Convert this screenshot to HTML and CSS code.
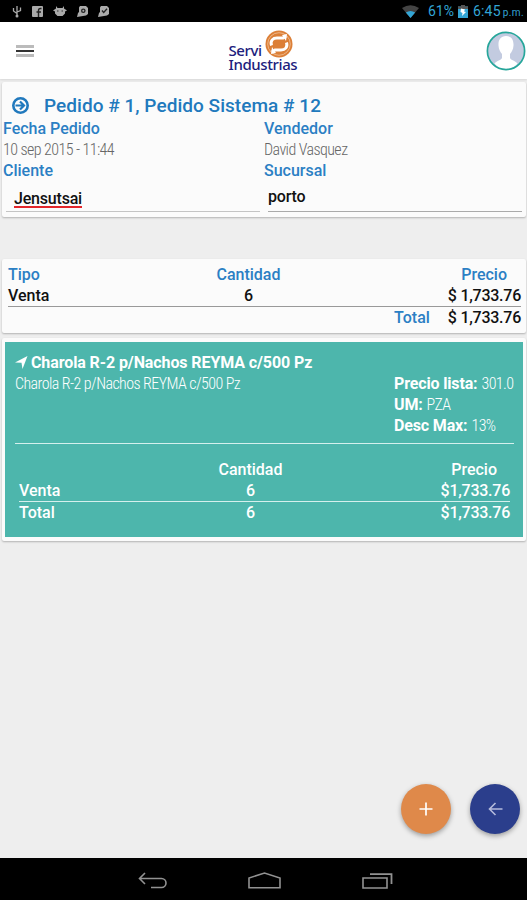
FILE: index.html
```html
<!DOCTYPE html>
<html lang="es">
<head>
    <meta charset="UTF-8">
    <meta name="viewport" content="width=device-width, initial-scale=1.0">
    <title>Servi Industrias - Pedido</title>
    <link rel="stylesheet" href="styles.css">
</head>
<body>
    <!-- Status bar -->
    <div class="status-bar">
        <div class="status-icons">
            <svg width="10" height="13" viewBox="0 0 10 13"><path d="M5 1v10M1.500 3v3L5 8.500M8.500 2.500v3L5 7" fill="none" stroke="#aaa" stroke-width="1.300"/><circle cx="5" cy="11" r="1.500" fill="#aaa"/></svg>
            <svg width="11" height="11" viewBox="0 0 11 11"><rect width="11" height="11" rx="1" fill="#aaa"/><path d="M6.500 11V4.500q0-2 2-2h1M4.500 6H9" fill="none" stroke="#222" stroke-width="1.400"/></svg>
            <svg width="14" height="10" viewBox="0 0 14 10"><path d="M3 0l1.500 2h5L11 0v2.500l3 2-2 1v2L9.500 10h-5L2 7.500v-2l-2-1 3-2z" fill="#aaa"/><path d="M4 5h1.500M8.500 5H10" stroke="#333"/></svg>
            <svg width="11" height="11" viewBox="0 0 11 11"><path d="M3 0h6l2 2v6L9 9.500 0 11l1-4 1-1V1.500z" fill="#aaa"/><circle cx="6.300" cy="4.700" r="2.300" fill="#222"/><circle cx="6.300" cy="4.700" r="1" fill="#aaa"/></svg>
            <svg width="11" height="11" viewBox="0 0 11 11"><path d="M3 0h6l2 2v6L9 9.500 0 11l1-4 1-1V1.500z" fill="#aaa"/><path d="M4 4.500l1.700 2L9 2.800" fill="none" stroke="#222" stroke-width="1.300"/></svg>
        </div>
        <div class="status-info">
            <svg class="wifi" width="17" height="13" viewBox="0 0 17 13"><path d="M0 3Q8.500-2.500 17 3L8.500 13z" fill="#444"/><path d="M3.800 7.500q4.700-3 9.400 0L8.500 13z" fill="#33a5d5"/></svg>
            <span class="percent">61%</span>
            <svg class="battery" width="10" height="13" viewBox="0 0 10 13"><path d="M3 0h4v1.500h3V13H0V1.500h3z" fill="#33a5d5"/><path d="M3 0h4v1.500h3V4H0V1.500h3z" fill="#555"/><path d="M3 3.500l4 1-1 2 2 .5-4 4 .500-3L2.500 7z" fill="#fff"/></svg>
            <span class="clock">6:45</span><span class="meridiem">p.m.</span>
        </div>
    </div>

    <header>
        <button type="button" class="menu"><span></span><span></span><span></span></button>
        <div class="logo">
            <div class="logo-top">
                <span>Servi</span>
                <svg width="28" height="28" viewBox="0 0 28 28"><circle cx="14" cy="14" r="13.500" fill="#dc7f37"/><circle cx="14" cy="14" r="11.300" fill="none" stroke="#f3c49c" stroke-width=".8"/><path d="M6.500 15.500C5 10.500 8 8 12 8h6l3-2M21.500 12.500C23 17.500 20 20 16 20h-6l-3 2" fill="none" stroke="#fff" stroke-width="3"/><path d="M17 5l5-1-1 7zM11 23l-5 1 1-7z" fill="#fff"/></svg>
            </div>
            <span class="logo-bottom">Industrias</span>
        </div>
        <svg class="avatar" width="40" height="40" viewBox="0 0 40 40"><circle cx="20" cy="20" r="18.500" fill="#c3cbe0"/><path d="M20 5c5.500 0 7.800 4 7.500 9.500-.3 4-1.500 6-3.500 8.500v4c1 2.500 5 2.500 7.500 5.500Q27 38 20 38T8.500 32.500C11 29.500 15 29.500 16 27v-4c-2-2.500-3.200-4.500-3.500-8.500C12.200 9 14.500 5 20 5z" fill="#fff"/><circle cx="20" cy="20" r="18.600" fill="none" stroke="#26a69a" stroke-width="1.700"/></svg>
    </header>

    <main>
        <!-- Order data -->
        <section class="card order">
            <h1>
                <svg width="17" height="17" viewBox="0 0 17 17"><circle cx="8.500" cy="8.500" r="7.200" fill="none" stroke="#2179bd" stroke-width="2.600"/><path d="M3.500 8.500h8M8 4.500l4 4-4 4" fill="none" stroke="#2179bd" stroke-width="2.200"/></svg>
                <span>Pedido # 1, Pedido Sistema # 12</span>
            </h1>
            <div class="order-grid">
                <div class="label">Fecha Pedido</div>
                <div class="label">Vendedor</div>
                <div class="value">10 sep 2015 - 11:44</div>
                <div class="value">David Vasquez</div>
                <div class="label">Cliente</div>
                <div class="label">Sucursal</div>
                <div class="field client"><span>Jensutsai</span></div>
                <div class="field branch"><span>porto</span></div>
            </div>
        </section>

        <!-- Totals -->
        <section class="card totals">
            <div class="row label">
                <span>Tipo</span>
                <span class="center">Cantidad</span>
                <span class="price-title">Precio</span>
            </div>
            <div class="row line">
                <span>Venta</span>
                <span class="center">6</span>
                <span class="right">$ 1,733.76</span>
            </div>
            <div class="total-row">
                <span class="label">Total</span>
                <span class="right">$ 1,733.76</span>
            </div>
        </section>

        <!-- Product -->
        <section class="card product-card">
            <div class="product">
                <h2>
                    <svg width="13" height="13" viewBox="0 0 13 13"><path d="M12.500 0L7.500 13 6.500 6.800 0 6.500z" fill="#fff"/></svg>
                    <span>Charola R-2 p/Nachos REYMA c/500 Pz</span>
                </h2>
                <div class="details">
                    <p class="description">Charola R-2 p/Nachos REYMA c/500 Pz</p>
                    <ul>
                        <li><b>Precio lista:</b> <span>301.0</span></li>
                        <li><b>UM:</b> <span>PZA</span></li>
                        <li><b>Desc Max:</b> <span>13%</span></li>
                    </ul>
                </div>
                <div class="product-table">
                    <div class="row">
                        <span></span>
                        <span class="center">Cantidad</span>
                        <span class="price-title">Precio</span>
                    </div>
                    <div class="row line">
                        <span>Venta</span>
                        <span class="center">6</span>
                        <span class="right">$1,733.76</span>
                    </div>
                    <div class="row">
                        <span>Total</span>
                        <span class="center">6</span>
                        <span class="right">$1,733.76</span>
                    </div>
                </div>
            </div>
        </section>

        <div class="actions">
            <button type="button" class="fab add"><svg width="14" height="14" viewBox="0 0 14 14"><path d="M7 .5v13M.5 7h13" stroke="#fff" stroke-width="1.700"/></svg></button>
            <button type="button" class="fab back"><svg width="15" height="14" viewBox="0 0 15 14"><path d="M14.500 7H1.500M7.500 1l-6 6 6 6" fill="none" stroke="#b5bbdc" stroke-width="1.600"/></svg></button>
        </div>
    </main>

    <!-- Android navigation -->
    <nav>
        <svg width="29" height="17" viewBox="0 0 29 17"><path d="M1 6.500h22.500a4.400 4.400 0 0 1 0 9H13M7 1L1.500 6.500 7 12" fill="none" stroke="#929292" stroke-width="1.600"/></svg>
        <svg width="33" height="17" viewBox="0 0 33 17"><path d="M1 15.800V6L16.500 1 32 6v9.800z" fill="none" stroke="#929292" stroke-width="1.600"/></svg>
        <svg width="31" height="16" viewBox="0 0 31 16"><path d="M1 5h24v10H1z" fill="none" stroke="#929292" stroke-width="1.600"/><path d="M8 1.200h21.500V11" fill="none" stroke="#929292" stroke-width="1.800"/></svg>
    </nav>
</body>
</html>
```
FILE: styles.css
```css
* {
    box-sizing: border-box;
}

body {
    margin: 0;
    height: 900px;
    display: flex;
    flex-direction: column;
    overflow: hidden;
    font-family: Roboto, "Liberation Sans", sans-serif;
    font-size: 16px;
    line-height: 21px;
    background-color: #eee;
    color: #111;
}

svg {
    display: block;
    flex-shrink: 0;
}

button {
    padding: 0;
    border: none;
    background: none;
    cursor: pointer;
}

.status-bar {
    height: 22px;
    flex-shrink: 0;
    padding: 0 3px 0 12px;
    display: flex;
    justify-content: space-between;
    align-items: center;
    background-color: #000;
    color: #33a5d5;
}

.status-icons,
.status-info {
    display: flex;
    align-items: center;
    gap: 10px;
}

.status-info {
    gap: 0;
    font-size: 14px;
}

.wifi {
    margin-right: 9px;
}

.battery {
    margin: 0 5px 0 4px;
}

.clock {
    letter-spacing: 0.2px;
}

.meridiem {
    margin: 3px 0 0 2px;
    font-size: 10px;
    letter-spacing: 0.4px;
}

header {
    height: 57px;
    flex-shrink: 0;
    display: grid;
    grid-template-columns: 1fr auto 1fr;
    align-items: center;
    background-color: #fff;
    box-shadow: 0 1px 2px rgba(0, 0, 0, 0.1);
}

.menu {
    width: 18px;
    margin-left: 16px;
    display: flex;
    flex-direction: column;
    gap: 2px;
}

.menu span {
    height: 3px;
    background-color: #bbb;
}

.menu span:nth-child(2) {
    height: 2px;
    background-color: #333;
}

.logo {
    width: 70px;
    color: #20207c;
    font-family: "Noto Sans", sans-serif;
    font-size: 15px;
    line-height: 14px;
    font-weight: 500;
    letter-spacing: -0.4px;
}

.logo-top {
    display: flex;
    align-items: flex-end;
    gap: 3px;
}

.logo-top svg {
    margin-bottom: -1px;
}

.logo-bottom {
    display: block;
}

.avatar {
    justify-self: end;
    margin-right: 1px;
}

main {
    flex: 1;
    padding: 3px 1px 0 2px;
    display: flex;
    flex-direction: column;
}

.card {
    background-color: #fbfbfb;
    border-radius: 2px;
    box-shadow: 0 1px 2px rgba(0, 0, 0, 0.25);
}

.label {
    color: #2b7fc4;
    font-weight: 500;
    letter-spacing: 0;
}

.order {
    height: 135px;
    padding: 12px 0 0;
}

h1 {
    margin: 0 0 1px;
    padding-left: 10px;
    height: 23px;
    display: flex;
    align-items: center;
    gap: 15px;
    color: #2179bd;
    font-size: 19px;
    font-weight: 500;
    letter-spacing: 0.04px;
}

.order-grid {
    padding-left: 1px;
    display: grid;
    grid-template-columns: 261px 1fr;
}

.value,
.description,
.details li span {
    font-family: "Roboto Condensed", Roboto, sans-serif;
    font-stretch: 75%;
    font-weight: 300;
    letter-spacing: -0.57px;
}

.value {
    color: #666;
}

.field {
    height: 31px;
    font-weight: 500;
    letter-spacing: -0.2px;
}

.field span {
    display: inline-block;
    line-height: 15px;
}

.client {
    margin: 0 4px 0 3px;
    padding: 7px 0 0 8px;
    border: solid #c4c4c4;
    border-width: 0 0 1px;
}

.client span {
    border-bottom: 2px solid #e3262b;
}

.branch {
    margin: 0 4px 0 4px;
    padding-top: 5px;
    border-bottom: 1px solid #aaa;
}

.totals {
    height: 74px;
    margin-top: 42px;
    padding: 5px 5px 0 6px;
    font-weight: 500;
}

.row {
    display: grid;
    grid-template-columns: 1fr 1fr 1fr;
}

.line {
    border-bottom: 1px solid #999;
}

.center {
    text-align: center;
}

.right {
    text-align: right;
    letter-spacing: -0.25px;
}

.price-title {
    padding-right: 14px;
    text-align: right;
}

.totals .center {
    padding-right: 31px;
    margin-left: -1px;
}

.total-row {
    display: flex;
    justify-content: flex-end;
    gap: 18px;
}

.product-card {
    margin-top: 5px;
    padding: 4px 3px;
}

.product {
    height: 195px;
    padding: 10px 9px 0 10px;
    background-color: #4db6ac;
    color: #fff;
}

h2 {
    margin: 0;
    display: flex;
    align-items: center;
    gap: 3px;
    font-size: 16px;
    font-weight: 700;
    letter-spacing: -0.1px;
}

.details {
    height: 71px;
    display: flex;
    border-bottom: 1px solid #d5f0ed;
}

.description {
    width: 379px;
    margin: 0;
}

.details ul {
    margin: 0;
    padding: 0;
    list-style: none;
    white-space: nowrap;
}

.details b {
    font-weight: 700;
    letter-spacing: -0.15px;
}

.product-table {
    padding: 15px 4px 0;
    font-weight: 500;
}

.product-table .line {
    border-color: #d5f0ed;
}

.product-table .center {
    padding-right: 28px;
}

.product-table .price-title {
    padding-right: 13px;
}

.actions {
    margin-top: auto;
    padding: 0 6px 24px 0;
    display: flex;
    justify-content: flex-end;
    gap: 19px;
}

.fab {
    width: 50px;
    height: 50px;
    display: flex;
    justify-content: center;
    align-items: center;
    border-radius: 50%;
    box-shadow: 0 2px 5px rgba(0, 0, 0, 0.35);
}

.add {
    background-color: #df894a;
}

.back {
    background-color: #2b3e8c;
}

nav {
    height: 42px;
    flex-shrink: 0;
    padding: 3px 0 0 3px;
    display: flex;
    justify-content: center;
    align-items: center;
    gap: 81px;
    background-color: #000;
}
```
